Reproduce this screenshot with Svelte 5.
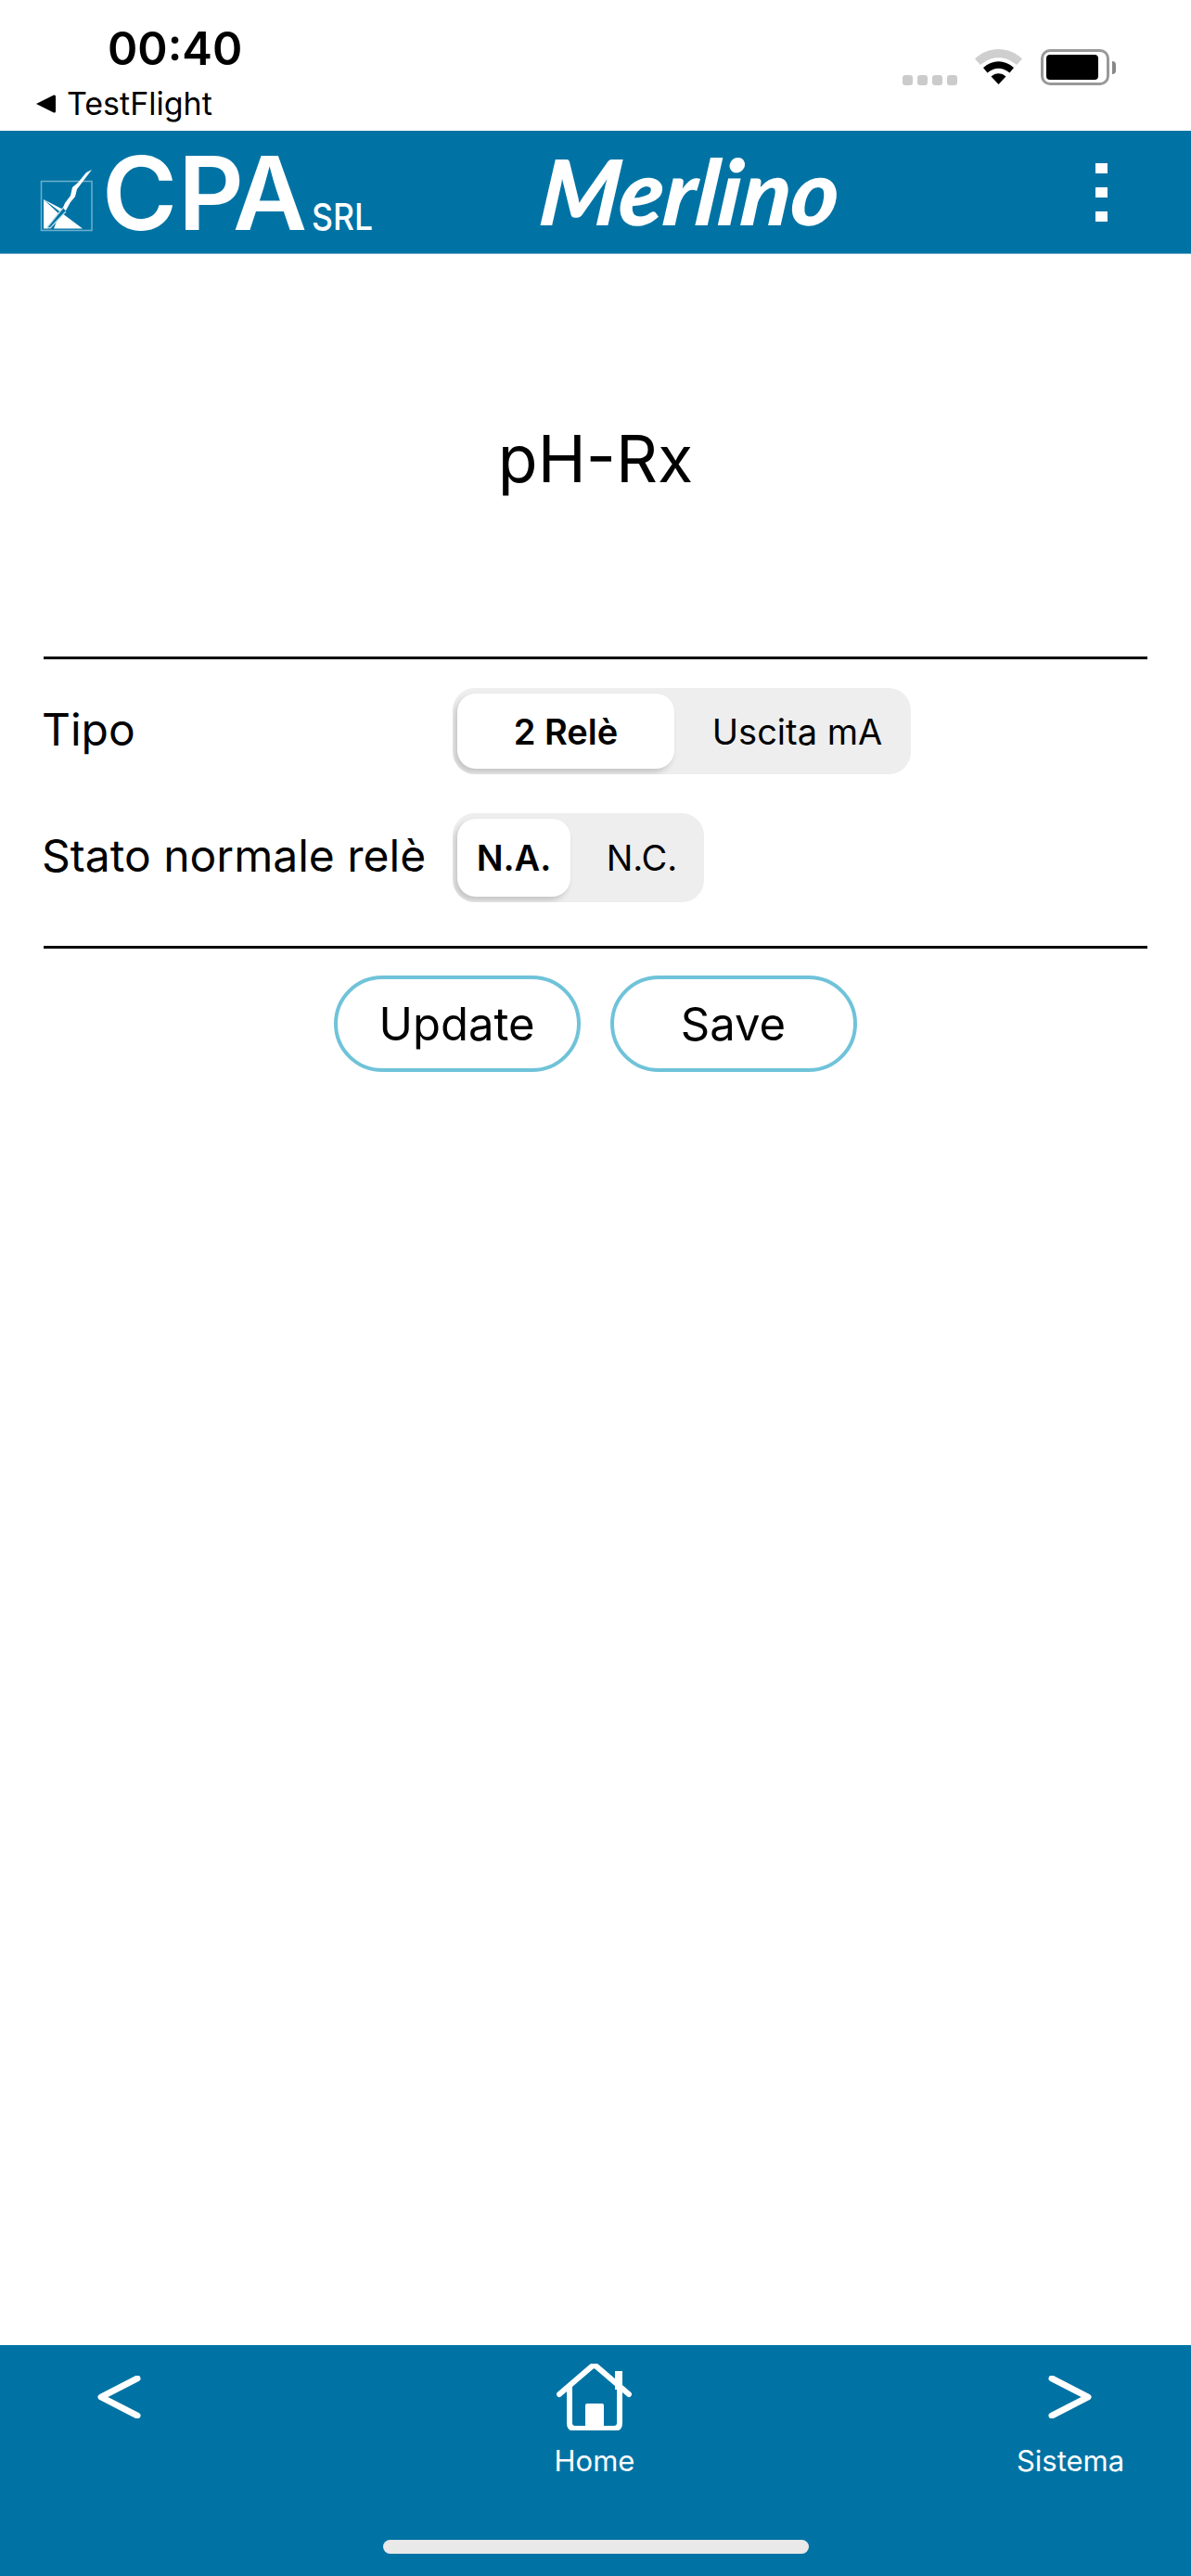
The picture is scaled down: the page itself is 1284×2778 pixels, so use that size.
<script>
  const tabs = [
    { label: 'Tipo', kind: 'wide', options: ['2 Relè', 'Uscita mA'] },
    { label: 'Stato normale relè', kind: 'narrow', options: ['N.A.', 'N.C.'] }
  ];
</script>

<div class="page">
  <header class="status">
    <div class="status-left">
      <div class="time">00:40</div>
      <div class="back">
        <svg class="back-tri" viewBox="0 0 22 22" aria-hidden="true"><path d="M1 11 20 1.500Q22 1 22 3V19Q22 21 20 20.500Z" /></svg>
        <span>TestFlight</span>
      </div>
    </div>
    <div class="status-right">
      <div class="cells"><i></i><i></i><i></i><i></i></div>
      <svg class="wifi" viewBox="0 0 51 38" aria-hidden="true">
        <path d="M0 10.500C14 -3.500 37 -3.500 51 10.500L45 17C33 6.500 18 6.500 6 17Z" fill="#cfcfcf" />
        <path d="M9 20C19 11 32 11 42 20L37.500 25.500C30 19 21 19 13.500 25.500Z" fill="#000" />
        <path d="M17.500 29.500C22 25 29 25 33.500 29.500L25.500 38Z" fill="#000" />
      </svg>
      <div class="battery"><div class="battery-fill"></div></div>
      <div class="nub"></div>
    </div>
  </header>

  <nav class="topbar">
    <svg class="cpa" viewBox="43 141 370 132" aria-label="CPA SRL">
      <rect x="44.500" y="195.500" width="54.500" height="53" fill="none" stroke="#6fb0cd" stroke-width="1.500" />
      <path d="M47 215 89 246.500H58L62 236 68 226Z" fill="#fff" />
      <path d="M47 215 64 231 52 246.500H47Z" fill="#fff" />
      <path d="M99 183 93 186 84 197 78 202 76 211 70 219 67 226 71 227 76 218 81 212 83 204Z" fill="#fff" />
      <path d="M68 224 51 245 54 246 71 228" fill="#0073a4" stroke="#bfe0ee" stroke-width="1.200" />
      <text x="110 192 251" y="248" class="cpa-main">CPA</text>
      <text x="336" y="248" class="cpa-srl" textLength="66" lengthAdjust="spacingAndGlyphs">SRL</text>
    </svg>
    <div class="merlino">Merlino</div>
    <div class="kebab"><i></i><i></i><i></i></div>
  </nav>

  <main class="content">
    <h1>pH-Rx</h1>
    <section class="form">
      {#each tabs as t}
        <div class="row">
          <div class="label">{t.label}</div>
          <div class="seg {t.kind}">
            <div class="opt on">{t.options[0]}</div>
            <div class="opt off">{t.options[1]}</div>
          </div>
        </div>
      {/each}
    </section>
    <div class="buttons">
      <button>Update</button>
      <button>Save</button>
    </div>
  </main>

  <footer class="bottombar">
    <div class="nav-items">
      <div class="nav-item side">
        <svg class="chev" viewBox="0 0 48 46" aria-hidden="true"><path d="M44 3 5 23 44 43" /></svg>
      </div>
      <div class="nav-item center">
        <svg class="home" viewBox="0 0 81 72" aria-hidden="true">
          <path class="h-line" d="M3 33 38 3Q40.500 1.500 43 3L78 33" />
          <path class="h-line" d="M14 25V64Q14 70 20 70H62Q68 70 68 64V25" />
          <path class="h-fill" d="M31 45Q31 43 33 43H49Q51 43 51 45V68H31Z" />
          <rect class="h-fill" x="63" y="8" width="8" height="20" />
        </svg>
        <span>Home</span>
      </div>
      <div class="nav-item side">
        <svg class="chev" viewBox="0 0 48 46" aria-hidden="true"><path d="M4 3 43 23 4 43" /></svg>
        <span>Sistema</span>
      </div>
    </div>
    <div class="indicator"></div>
  </footer>
</div>

<style>
  :global(body) { margin: 0; background: #fff; }
  .page {
    width: 1284px;
    height: 2778px;
    display: flex;
    flex-direction: column;
    font-family: Inter, "Liberation Sans", sans-serif;
    color: #000;
    overflow: hidden;
  }
  .status {
    height: 141px;
    flex: none;
    display: flex;
    justify-content: space-between;
  }
  .status-left { padding: 24px 0 0 38px; }
  .time { font-size: 49px; font-weight: 600; line-height: 58px; margin-left: 78px; }
  .back { display: flex; align-items: center; gap: 12px; font-size: 34px; line-height: 40px; margin-top: 10px; }
  .back-tri { width: 22px; height: 22px; fill: #000; }
  .status-right { display: flex; align-items: flex-start; padding: 53px 81px 0 0; }
  .cells { display: flex; gap: 5px; margin-top: 28px; margin-right: 19px; }
  .cells i { width: 11px; height: 11px; border-radius: 3px; background: #cbcbcb; display: block; }
  .wifi { width: 51px; height: 38px; margin-right: 20px; }
  .battery {
    width: 74px; height: 39px; box-sizing: border-box;
    border: 3px solid #999; border-radius: 10px; padding: 3px;
  }
  .battery-fill { width: 56px; height: 27px; background: #000; border-radius: 4px; }
  .nub { width: 4px; height: 14px; margin-top: 13px; margin-left: 3px; background: #888; border-radius: 0 7px 7px 0; }
  .topbar {
    height: 133px;
    flex: none;
    box-sizing: border-box;
    background: #0073a4;
    border-bottom: 1px solid #6aaac8;
    display: flex;
    align-items: center;
  }
  .cpa { width: 370px; height: 132px; margin-left: 43px; display: block; flex: none; overflow: visible; }
  .cpa-main { font-family: Inter, sans-serif; font-weight: 600; font-size: 110px; fill: #fff; }
  .cpa-srl { font-family: Inter, sans-serif; font-weight: 500; font-size: 40px; fill: #fff; }
  .merlino {
    font-family: Lato, sans-serif;
    font-style: italic;
    font-weight: 900;
    font-size: 98px;
    color: #fff;
    line-height: 116px;
    margin-left: 170px;
    padding-bottom: 4px;
    transform: skewX(-6deg);
  }
  .kebab { margin-left: auto; margin-right: 90px; display: flex; flex-direction: column; gap: 15px; }
  .kebab i { width: 13px; height: 11px; background: #fff; display: block; }
  .content { flex: 1; padding: 0 47px; }
  h1 { margin: 0; padding-top: 180px; font-size: 70px; font-weight: 400; line-height: 82px; text-align: center; height: 434px; box-sizing: border-box; }
  .form {
    border-top: 3px solid #000;
    border-bottom: 3px solid #000;
    padding: 31px 0 47px;
    display: flex;
    flex-direction: column;
    gap: 42px;
  }
  .row { display: flex; align-items: center; }
  .label { width: 441px; font-size: 48px; line-height: 56px; flex: none; padding-bottom: 4px; text-indent: -2px; }
  .seg {
    display: flex;
    background: #eeeeee;
    border-radius: 24px;
    padding: 6px 0 6px 5px;
    font-size: 38px;
    box-sizing: border-box;
    overflow: hidden;
  }
  .seg.wide { width: 494px; height: 93px; }
  .seg.narrow { width: 271px; height: 96px; }
  .opt { display: flex; align-items: center; justify-content: center; }
  .off { flex: 1; padding-left: 10px; }
  .on { flex: none; background: #fff; border-radius: 20px; font-weight: 600; box-shadow: -3px 4px 6px rgba(0,0,0,.18); }
  .wide .on { width: 234px; }
  .narrow .on { width: 122px; }
  .buttons { display: flex; justify-content: center; gap: 32px; padding-top: 29px; margin-right: 1px; }
  button {
    width: 266px; height: 104px;
    border: 4px solid #6fc3d9;
    border-radius: 52px;
    background: #fff;
    font: 400 49px Inter, sans-serif;
    color: #000;
    padding: 0;
  }
  .bottombar {
    height: 249px;
    flex: none;
    background: #0073a4;
    position: relative;
    color: #fff;
  }
  .nav-items {
    display: flex;
    justify-content: space-between;
    padding: 20px 70px 0 68px;
  }
  .nav-item { display: flex; flex-direction: column; align-items: center; width: 120px; font-size: 31px; line-height: 36px; }
  .center { margin-right: 2px; }
  .center span { margin-top: 15px; margin-left: 2px; }
  .side { padding-top: 13px; }
  .side span { margin-top: 28px; }
  .chev { width: 48px; height: 46px; fill: none; stroke: #fff; stroke-width: 7; stroke-linecap: round; stroke-linejoin: round; }
  .home { width: 81px; height: 72px; }
  .h-line { fill: none; stroke: #fff; stroke-width: 6; stroke-linecap: round; }
  .h-fill { fill: #fff; }
  .indicator {
    position: absolute;
    left: 413px; top: 210px;
    width: 459px; height: 15px;
    background: #e9e9e9;
    border-radius: 8px;
  }
</style>
